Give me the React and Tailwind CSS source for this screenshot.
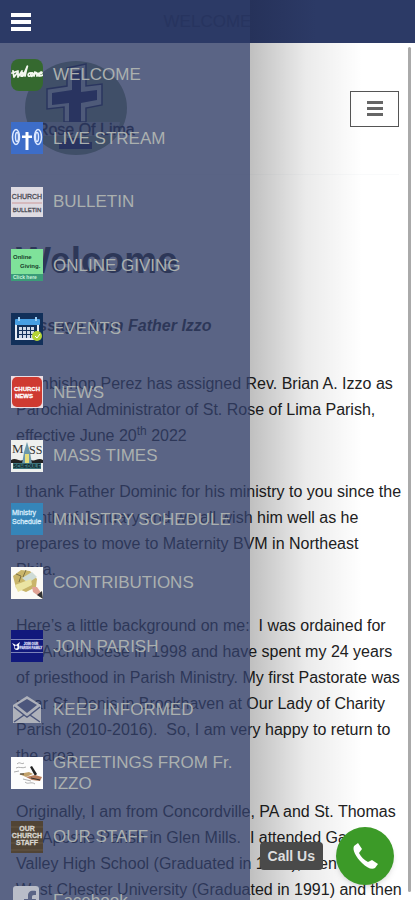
const sans = 'font-["Liberation_Sans",Arial,sans-serif]';

function WelcomeIcon() {
  return (
    <svg viewBox="0 0 32 32" className="size-8">
      <rect width="32" height="32" rx="8" fill="#35692f" />
      <path d="M2 12l1 6 4-5 0 5 4-6M10 17c3-1 3-4 1-3s-1 4 1 3l4-9c1-2 0-1-2 9M20 14c-3-1-4 4-1 3M21 14c-2 1-1 4 0 3s2-3 0-3M23 17l1-4 0 2c2-3 2 0 2 2 1-4 2-3 2 0M29 15c3-1 2-3 0-1s0 4 3 2M1 14l6-2" fill="none" stroke="#f4f8f0" strokeWidth="1.8" strokeLinecap="round" strokeLinejoin="round" />
    </svg>
  );
}

function StreamIcon() {
  return (
    <svg viewBox="0 0 32 32" className="size-8">
      <rect width="32" height="32" fill="#3d6dc8" />
      <path d="M14.5 10h3v3.500h3.500v2.500h-3.500V28h-3V16H11v-2.500h3.500z" fill="#fff" />
      <g fill="none" stroke="#dce8ff" strokeWidth="1.500">
        <ellipse cx="5" cy="15" rx="3.500" ry="7.500" />
        <ellipse cx="6" cy="15" rx="1.500" ry="4.500" />
        <ellipse cx="27" cy="15" rx="3.500" ry="7.500" />
        <ellipse cx="26" cy="15" rx="1.500" ry="4.500" />
      </g>
    </svg>
  );
}

function BulletinIcon() {
  return (
    <svg viewBox="0 0 32 32" className="size-8">
      <rect y="1" width="32" height="30" fill="#dedbe2" />
      <path d="M1 17h30" stroke="#c99" strokeWidth="1" />
      <g fill="#4b4c56" stroke="#4b4c56" strokeWidth="0.300" textAnchor="middle" fontFamily="Liberation Sans, sans-serif">
        <text x="16" y="13" fontSize="7">CHURCH</text>
        <text x="16" y="26" fontSize="6">BULLETIN</text>
      </g>
    </svg>
  );
}

function GivingIcon() {
  return (
    <svg viewBox="0 0 32 32" className="size-8">
      <rect width="32" height="32" fill="#7fe29a" />
      <rect y="25" width="32" height="7" fill="#3b9c78" />
      <g fontFamily="Liberation Sans, sans-serif" fontWeight="bold" fontSize="6" fill="#17432b">
        <text x="2" y="10">Online</text>
        <text x="9" y="19">Giving.</text>
        <text x="2" y="30" fontSize="5" fill="#c9f5d8">Click here</text>
      </g>
    </svg>
  );
}

function EventsIcon() {
  return (
    <svg viewBox="0 0 32 32" className="size-8">
      <rect width="32" height="32" fill="#12305a" />
      <path d="M5 10v16h18M27 10v11" fill="none" stroke="#e8edf5" strokeWidth="2" />
      <rect x="4" y="6" width="25" height="6" rx="1" fill="#479fe3" />
      <path d="M8 4v4M25 4v4" stroke="#9ed0f5" strokeWidth="2" />
      <g stroke="#cfd9e8" strokeWidth="3" strokeDasharray="3 1">
        <path d="M8 15.500h16M8 19.500h16M8 23.500h14" />
      </g>
      <circle cx="26" cy="23" r="5" fill="#b5d336" />
      <path d="M24 23l2 2 3-4" fill="none" stroke="#fff" strokeWidth="1" />
    </svg>
  );
}

function NewsIcon() {
  return (
    <svg viewBox="0 0 32 32" className="size-8">
      <rect width="32" height="32" fill="#e9dde3" />
      <rect x="1" y="1" width="30" height="30" rx="5" fill="#cf3a31" />
      <g fill="#fff" stroke="#fff" strokeWidth="0.300" fontFamily="Liberation Sans, sans-serif" fontWeight="bold">
        <text x="3" y="15" fontSize="6">CHURCH</text>
        <text x="4" y="22" fontSize="6">NEWS</text>
      </g>
    </svg>
  );
}

function MassIcon() {
  return (
    <svg viewBox="0 0 32 32" className="size-8">
      <rect width="32" height="32" fill="#eef0ee" />
      <text x="1" y="13" fontSize="13" fontFamily="Liberation Serif, serif" fill="#333">M</text>
      <text x="18" y="14" fontSize="12" fontFamily="Liberation Serif, serif" fill="#333">SS</text>
      <path d="M0 20c5-3 8 2 12 0v3H0zM32 20c-5-3-8 2-12 0v3h12z" fill="#222" />
      <path d="M16 2l3 10 2 12H11l2-12z" fill="#6b98ab" />
      <rect x="14" y="14" width="4" height="10" fill="#e5dd7c" />
      <rect x="2" y="23" width="28" height="6" fill="#3d747c" />
      <text x="16" y="28" fontSize="5" textAnchor="middle" fontWeight="bold" fontFamily="Liberation Sans, sans-serif" fill="#0d1c22">SCHEDULE</text>
    </svg>
  );
}

function MinistryIcon() {
  return (
    <svg viewBox="0 0 32 32" className="size-8">
      <rect width="32" height="32" fill="#3585b9" />
      <g fill="#d4eafa" stroke="#d4eafa" strokeWidth="0.300" fontFamily="Liberation Sans, sans-serif" fontSize="7">
        <text x="1" y="12">Ministry</text>
        <text x="1" y="21">Schedule</text>
      </g>
    </svg>
  );
}

function ContributionsIcon() {
  return (
    <svg viewBox="0 0 32 32" className="size-8">
      <rect width="32" height="32" fill="#fbfaf6" />
      <path d="M2 9l8-6 9 1 7 8-1 8-10 5-10-4z" fill="#c9b569" />
      <path d="M5 7l5 2-2 6M15 3l-3 7 5 2" fill="none" stroke="#7b7045" strokeWidth="1" />
      <path d="M11 11l10-6 5 5-9 6z" fill="#cfdcd6" />
      <path d="M4 18l16-6 1 6-14 7z" fill="#ebe4a2" />
      <path d="M21 20l5 0 5 7-2 3-7-5z" fill="#e0a294" />
      <path d="M26 28l5-4 1 8z" fill="#333" />
    </svg>
  );
}

function JoinIcon() {
  return (
    <svg viewBox="0 0 32 32" className="size-8">
      <rect width="32" height="32" fill="#11197c" />
      <path d="M0 9.500h32M0 22.500h32" stroke="#7b83b9" strokeWidth="1" />
      <path d="M1 13l4 2 4-3-1 3c3 6-6 7-5 1z" fill="#fff" />
      <circle cx="5" cy="17" r="1.500" fill="#11197c" />
      <g fill="#c6caea" stroke="#c6caea" strokeWidth="0.300" fontFamily="Liberation Sans, sans-serif" fontWeight="bold" fontSize="3" textAnchor="middle">
        <text x="20" y="15">JOIN OUR</text>
        <text x="20" y="19">PARISH FAMILY</text>
      </g>
    </svg>
  );
}

function InformedIcon() {
  return (
    <svg viewBox="0 0 32 32" className="size-8">
      <path d="M2 11L16 2l14 9v18H2z" fill="#aeb1ba" />
      <path d="M6 11l10-6 10 6-10 8z" fill="#4c567c" />
      <path d="M3 13l10 8L3 28M29 13l-10 8 10 7M13 21l3 2 3-2" fill="none" stroke="#4c567c" strokeWidth="1.500" />
    </svg>
  );
}

function GreetingsIcon() {
  return (
    <svg viewBox="0 0 32 32" className="size-8">
      <rect width="32" height="32" fill="#fdfdfd" />
      <path d="M6 7c3-3 4 1 7-1M5 11c3-2 6 1 10-1M3 15l5-1M14 25c3 3 6-1 10 2M12 22l8 2" fill="none" stroke="#999" strokeWidth="0.800" />
      <path d="M8 17l10-2 4 2-7 3z" fill="#c3a26b" />
      <path d="M19 10l2-1 5 8-2 2z" fill="#222" />
      <path d="M15 20l9-2 7 2-2 4-8-1z" fill="#b77d5c" />
      <path d="M9 17l4 0M20 21l9 2" stroke="#333" strokeWidth="1" />
    </svg>
  );
}

function StaffIcon() {
  return (
    <svg viewBox="0 0 32 32" className="size-8">
      <rect width="32" height="32" fill="#514435" />
      <path d="M0 6h32M0 14h32M0 22h32M0 29h32" stroke="#665744" strokeWidth="1" />
      <g fill="#d7d5cf" stroke="#d7d5cf" strokeWidth="0.300" fontFamily="Liberation Sans, sans-serif" fontWeight="bold" textAnchor="middle">
        <text x="16" y="10" fontSize="7">OUR</text>
        <text x="16" y="17" fontSize="7">CHURCH</text>
        <text x="16" y="24" fontSize="7">STAFF</text>
      </g>
    </svg>
  );
}

function FacebookIcon() {
  return (
    <svg viewBox="0 0 32 32" className="size-8">
      <rect x="2" y="2" width="26" height="28" rx="3" fill="#b9bdc8" />
      <path d="M17 30V19h-4v-4h4v-3c0-4 2-6 8-5v4c-3 0-4 0-4 2v2h4l-1 4h-3v11z" fill="#5a6485" />
    </svg>
  );
}

const menu = [
  { label: "WELCOME", Icon: WelcomeIcon },
  { label: "LIVE STREAM", Icon: StreamIcon },
  { label: "BULLETIN", Icon: BulletinIcon },
  { label: "ONLINE GIVING", Icon: GivingIcon },
  { label: "EVENTS", Icon: EventsIcon },
  { label: "NEWS", Icon: NewsIcon },
  { label: "MASS TIMES", Icon: MassIcon },
  { label: "MINISTRY SCHEDULE", Icon: MinistryIcon },
  { label: "CONTRIBUTIONS", Icon: ContributionsIcon },
  { label: "JOIN PARISH", Icon: JoinIcon },
  { label: "KEEP INFORMED", Icon: InformedIcon },
  { label: "GREETINGS FROM Fr. IZZO", Icon: GreetingsIcon },
  { label: "OUR STAFF", Icon: StaffIcon },
  { label: "Facebook", Icon: FacebookIcon },
];

function ParishLogo() {
  return (
    <svg viewBox="0 0 120 100" className="h-[100px] w-[120px]">
      <ellipse cx="60" cy="49" rx="51" ry="47" fill="#7f9470" />
      <path d="M51 9l19-4v22l16-2v21l-16 3v14H48V48l-17 2V30l20-3z" fill="#c3cbc4" stroke="#10183f" strokeWidth="1.500" />
      <path d="M56 13l9-2v22l16-2v10l-16 3v19H53V44l-17 2V34l20-3z" fill="#0a1245" />
      <path d="M18 63h86l-3 14H20z" fill="#a9b3a8" />
      <text x="60" y="76" textAnchor="middle" fontSize="16" fontFamily="Liberation Sans, sans-serif" fill="#05081c" stroke="#05081c" strokeWidth="0.300">
        St Rose Of Lima
      </text>
      <path d="M51 79h16v4h9v7H43v-7h8z" fill="#0a1245" />
    </svg>
  );
}

export default function App() {
  return (
    <div className={`${sans} relative flex h-screen flex-col overflow-hidden bg-white text-[#222]`}>
      {/* Top bar */}
      <header className="relative flex h-[43px] shrink-0 items-center justify-center bg-[#2c3a66]">
        <span className="text-[17px] text-[#27345f]">WELCOME</span>
        <div className="absolute inset-y-0 left-[250px] right-0 bg-gradient-to-r from-[#26325a] to-[#2c3a66] to-40%" />
        <button aria-label="Close menu" className="absolute left-[11px] top-[13px] flex flex-col gap-[3px]">
          <span className="h-1 w-5 bg-white" />
          <span className="h-1 w-5 bg-white" />
          <span className="h-1 w-5 bg-white" />
        </button>
      </header>

      <div className="relative min-h-0 flex-1 overflow-hidden">
        {/* Page */}
        <main className="pl-4 pr-4">
          <div className="flex h-[132px] items-center justify-between border-b border-gray-50">
            <ParishLogo />
            <button aria-label="Site menu" className="flex h-9 w-[49px] flex-col items-center justify-center gap-[3px] border border-[#555]">
              <span className="h-[3px] w-4 bg-[#666]" />
              <span className="h-[3px] w-4 bg-[#666]" />
              <span className="h-[3px] w-4 bg-[#666]" />
            </button>
          </div>
          <h1 className="mt-[66px] text-[37px] font-bold leading-10">Welcome</h1>
          <h2 className="mt-8 text-base font-bold italic leading-[26px]">Message from Father Izzo</h2>
          <div className="mt-8 space-y-[30px] whitespace-nowrap text-base leading-[26px]">
            <p>
              Archbishop Perez has assigned Rev. Brian A. Izzo as<br />
              Parochial Administrator of St. Rose of Lima Parish,<br />
              effective June 20<sup>th</sup> 2022
            </p>
            <p>
              I thank Father Dominic for his ministry to you since the<br />
              month of January and we all wish him well as he<br />
              prepares to move to Maternity BVM in Northeast<br />
              Phila.
            </p>
            <p>
              Here’s a little background on me:&nbsp; I was ordained for<br />
              the Archdiocese in 1998 and have spent my 24 years<br />
              of priesthood in Parish Ministry. My first Pastorate was<br />
              near St. Denis in Brookhaven at Our Lady of Charity<br />
              Parish (2010-2016).&nbsp; So, I am very happy to return to<br />
              the area.
            </p>
            <p>
              Originally, I am from Concordville, PA and St. Thomas<br />
              the Apostle Parish in Glen Mills.&nbsp; I attended Garnet<br />
              Valley High School (Graduated in 1987), then<br />
              West Chester University (Graduated in 1991) and then
            </p>
          </div>
        </main>
        <div className="absolute bottom-2 right-1 top-1 w-[3px] rounded-full bg-[#aaa]" />

        {/* Drawer */}
        <div className="pointer-events-none absolute inset-y-0 left-[250px] w-28 bg-gradient-to-r from-black/25 via-black/8 to-transparent" />
        <nav className="absolute inset-y-0 left-0 w-[250px] overflow-hidden bg-[#313d66]/80">
          <ul>
            {menu.map(({ label, Icon }) => (
              <li key={label} className="odd:h-[63px] even:h-16">
                <a href="#" className="flex h-full items-center gap-[10px] pl-[11px] pr-2 text-[17px] leading-[21px] text-[#abb0af]">
                  <span className="shrink-0">
                    <Icon />
                  </span>
                  {label}
                </a>
              </li>
            ))}
          </ul>
        </nav>

        {/* Call button */}
        <div className="absolute bottom-[15px] right-[21px] flex items-center gap-[13px]">
          <span className="rounded-sm bg-[#4a4a4a] px-2 py-1 text-sm font-bold text-[#ddd]">Call Us</span>
          <button aria-label="Call Us" className="flex size-[58px] items-center justify-center rounded-full bg-[#3c9a28] shadow-md">
            <svg viewBox="0 0 28 28" className="size-7">
              <path d="M3 4L7 1l4 6-3 4c2 4 5 7 9 9l4-2 6 4-3 4c-3 2-8 0-13-5C5 15 1 8 3 4z" fill="#fff" />
            </svg>
          </button>
        </div>
      </div>
    </div>
  );
}
